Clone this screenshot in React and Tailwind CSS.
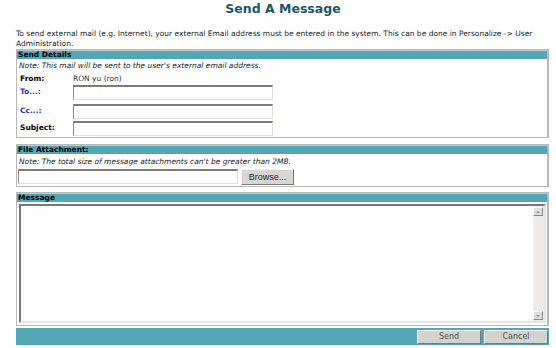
export default function App() {
  const f = { fontFamily: '"DejaVu Sans", Verdana, sans-serif' };
  const input =
    "h-[15px] bg-white border border-[#e6e0dc] border-t-2 border-t-[#7c7c7c] border-l-[#8c8c8c]";
  const btn =
    "w-[64px] h-[14px] bg-[#d4d2cc] border border-[#f4f4f4] border-r-[#777] border-b-[#777] text-[8px] leading-[12px] text-center text-[#555]";
  return (
    <div className="w-[556px] h-[348px] bg-white text-black relative overflow-hidden" style={f}>
      <div className="pt-[1px] text-center text-[12.5px] font-bold text-[#1b5766] leading-[16px] pl-[10px]">
        Send A Message
      </div>
      <div className="mt-[12px] ml-[16px] mr-[8px] text-[7.5px] leading-[10px] text-[#222]">
        To send external mail (e.g. Internet), your external Email address must be entered in the system. This can be done in Personalize -&gt; User Administration.
      </div>

      <div className="ml-[16px] w-[533px] border border-[#b8b8b8] border-r-2">
        <div className="h-[9px] bg-[#52a6b5] border-t border-[#c8c8c8] text-[7.5px] font-bold leading-[8px] pl-[1px]">
          Send Details
        </div>
        <div className="pl-[2px] text-[7.5px] italic leading-[14px] text-[#222]">
          Note: This mail will be sent to the user's external email address.
        </div>
        <div className="flex items-center h-[10px] mt-[1px] text-[7.5px]">
          <span className="w-[56px] pl-[3px] font-bold">From:</span>
          <span className="text-[#333]">RON yu (ron)</span>
        </div>
        <div className="flex items-center h-[16px] text-[7.5px]">
          <span className="w-[56px] pl-[3px] font-bold text-[#2233cc]">To...:</span>
          <div className={input + " w-[200px]"} />
        </div>
        <div className="flex items-center h-[16px] mt-[3px] text-[7.5px]">
          <span className="w-[56px] pl-[3px] font-bold text-[#2233cc]">Cc...:</span>
          <div className={input + " w-[200px]"} />
        </div>
        <div className="flex items-center h-[16px] mt-[1px] mb-[1px] text-[7.5px]">
          <span className="w-[56px] pl-[3px] font-bold">Subject:</span>
          <div className={input + " w-[200px]"} />
        </div>
      </div>

      <div className="ml-[16px] w-[533px] mt-[6px] border border-[#b8b8b8] border-r-2">
        <div className="h-[9px] bg-[#52a6b5] border-t border-[#c8c8c8] text-[7.5px] font-bold leading-[8px] pl-[1px]">
          File Attachment:
        </div>
        <div className="pl-[2px] text-[7.5px] italic leading-[13px] mt-[1px] text-[#222]">
          Note: The total size of message attachments can't be greater than 2MB.
        </div>
        <div className="flex items-center gap-[3px] pl-[1px] pb-[1px] h-[18px]">
          <div className={input + " w-[220px] h-[15px]"} />
          <div
            className="w-[53px] h-[16px] bg-[#d8d6d0] border border-[#f4f4f4] border-r-[#777] border-b-[#777] leading-[14px] text-center text-[#222]"
            style={{ fontFamily: '"Liberation Sans", Arial, sans-serif', fontSize: "9px" }}
          >
            Browse...
          </div>
        </div>
      </div>

      <div className="ml-[16px] w-[533px] mt-[5px] border border-[#b8b8b8] border-r-2">
        <div className="h-[9px] bg-[#52a6b5] border-t border-[#c8c8c8] text-[7.5px] font-bold leading-[8px] pl-[1px]">
          Message
        </div>
        <div className="pl-[2px] pr-[1px] pt-[2px] pb-[2px]">
          <div className="h-[119px] border-2 border-[#7a7a7a] border-r-[#e8e6e2] border-b-[#e8e6e2] bg-white flex justify-end">
            <div className="w-[11px] h-full bg-[#eeece8] flex flex-col justify-between py-[1px]">
              <div className="w-[10px] h-[9px] bg-[#e0ded8] border border-[#fff] border-r-[#888] border-b-[#888] flex items-center justify-center">
                <div className="w-0 h-0 border-l-[2px] border-r-[2px] border-b-[2px] border-transparent border-b-[#999]" />
              </div>
              <div className="w-[10px] h-[9px] bg-[#e0ded8] border border-[#fff] border-r-[#888] border-b-[#888] flex items-center justify-center">
                <div className="w-0 h-0 border-l-[2px] border-r-[2px] border-t-[2px] border-transparent border-t-[#999]" />
              </div>
            </div>
          </div>
        </div>
      </div>

      <div className="ml-[16px] w-[533px] mt-[2px] h-[17px] bg-[#52a6b5] flex items-center justify-end gap-[3px] pr-[1px]">
        <div className={btn}>Send</div>
        <div className={btn}>Cancel</div>
      </div>
    </div>
  );
}
